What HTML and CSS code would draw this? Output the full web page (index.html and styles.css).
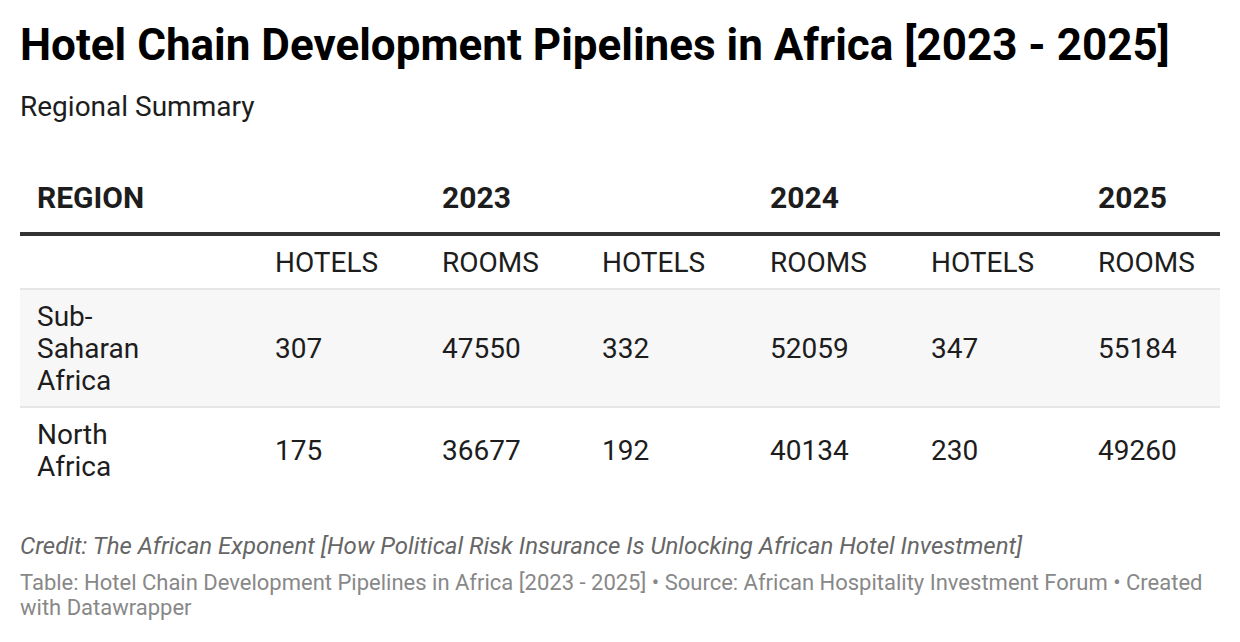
FILE: index.html
```html
<!DOCTYPE html>
<html lang="en">
<head>
<meta charset="utf-8">
<title>Hotel Chain Development Pipelines in Africa [2023 - 2025]</title>
<link rel="stylesheet" href="styles.css">
</head>
<body>
<div class="chart">
  <h1 class="title">Hotel Chain Development Pipelines in Africa [2023 - 2025]</h1>
  <p class="subtitle">Regional Summary</p>
  <table class="data">
    <colgroup>
      <col class="c-region">
      <col class="c-a"><col class="c-b"><col class="c-c"><col class="c-d"><col class="c-e"><col class="c-f">
    </colgroup>
    <thead>
      <tr class="head">
        <th>REGION</th><th></th><th>2023</th><th></th><th>2024</th><th></th><th>2025</th>
      </tr>
    </thead>
    <tbody>
      <tr class="sub">
        <td></td><td>HOTELS</td><td>ROOMS</td><td>HOTELS</td><td>ROOMS</td><td>HOTELS</td><td>ROOMS</td>
      </tr>
      <tr class="row shaded">
        <td class="region">Sub-<br>Saharan<br>Africa</td><td>307</td><td>47550</td><td>332</td><td>52059</td><td>347</td><td>55184</td>
      </tr>
      <tr class="row">
        <td class="region">North<br>Africa</td><td>175</td><td>36677</td><td>192</td><td>40134</td><td>230</td><td>49260</td>
      </tr>
    </tbody>
  </table>
  <p class="credit">Credit: The African Exponent [How Political Risk Insurance Is Unlocking African Hotel Investment]</p>
  <p class="footer">Table: Hotel Chain Development Pipelines in Africa [2023 - 2025] • Source: African Hospitality Investment Forum • Created with Datawrapper</p>
</div>
</body>
</html>
```
FILE: styles.css
```css
html, body {
  margin: 0;
  padding: 0;
  background: #ffffff;
}

body {
  font-family: Roboto, "Liberation Sans", Arial, sans-serif;
  color: #1d1d1d;
}

.chart {
  padding: 20px 20px 0 20px;
  width: 1200px;
}

.title {
  margin: 0;
  font-size: 44px;
  line-height: 50px;
  font-weight: 700;
  color: #000000;
}

.subtitle {
  margin: 21px 0 0 0;
  font-size: 28px;
  line-height: 32px;
  font-weight: 400;
  color: #1d1d1d;
}

.data {
  margin-top: 49px;
  width: 1200px;
  border-collapse: collapse;
  table-layout: fixed;
  font-size: 28px;
  line-height: 32px;
}

.c-region { width: 238px; }
.c-a { width: 167px; }
.c-b { width: 160px; }
.c-c { width: 168px; }
.c-d { width: 161px; }
.c-e { width: 167px; }
.c-f { width: 139px; }

.data th,
.data td {
  text-align: left;
  padding: 0 0 0 17px;
  vertical-align: middle;
}

.head th {
  font-size: 30px;
  font-weight: 700;
  padding-top: 10px;
  padding-bottom: 18px;
  border-bottom: 4px solid #333333;
  vertical-align: bottom;
}

.sub td {
  padding-top: 11px;
  padding-bottom: 9px;
  border-bottom: 2px solid #e6e6e6;
}

.row td {
  padding-top: 11px;
  padding-bottom: 9px;
}

.shaded td {
  background: #f7f7f7;
  border-bottom: 2px solid #e6e6e6;
}

.credit {
  margin: 40px 0 0 0;
  font-size: 24px;
  line-height: 28px;
  font-style: italic;
  color: #666666;
}

.footer {
  margin: 10px 0 0 0;
  font-size: 22px;
  line-height: 25px;
  color: #888888;
}
```
